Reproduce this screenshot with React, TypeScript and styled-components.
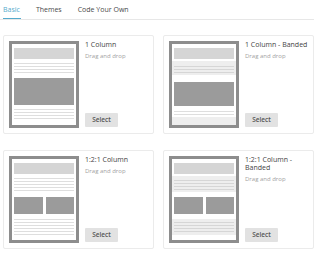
import React from "react";
import styled, { createGlobalStyle } from "styled-components";

const GlobalStyle = createGlobalStyle`
  html, body { margin: 0; padding: 0; background: #ffffff; }
  body { font-family: "Open Sans", "Liberation Sans", sans-serif; }
  * { box-sizing: border-box; }
`;

const Page = styled.div`
  width: 320px;
  height: 256px;
  padding: 0 6px 0 3px;
  overflow: hidden;
`;

const TabBar = styled.div`
  display: flex;
  gap: 15px;
  height: 20px;
  border-bottom: 1px solid #e7e7e7;
  margin-left: -3px;
  padding-left: 3px;
`;

const Tab = styled.div<{ $active?: boolean }>`
  height: 19px;
  padding: 5px 1px 0 0;
  font-size: 7px;
  line-height: 10px;
  color: ${(p) => (p.$active ? "#55aacc" : "#4a4a4a")};
  border-bottom: 1px solid ${(p) => (p.$active ? "#55aacc" : "transparent")};
  white-space: nowrap;
`;

const Grid = styled.div`
  margin-top: 15px;
  display: grid;
  grid-template-columns: 151px 151px;
  column-gap: 9px;
  row-gap: 16px;
`;

const Card = styled.div`
  height: 99px;
  border: 1px solid #ebebeb;
  border-radius: 2px;
  padding: 5px 3px 5px 5px;
  display: flex;
  gap: 6px;
  background: #fff;
`;

const Thumb = styled.div`
  flex: none;
  width: 70px;
  height: 87px;
  border: 3px solid #8d8d8d;
  background: #fff;
  display: flex;
  flex-direction: column;
  padding-top: 4px;
`;

const ThumbHeader = styled.div`
  height: 11px;
  margin: 0 2px;
  background: #d5d5d5;
`;

const LineGroup = styled.div<{ $mt: number; $band?: boolean; $pt?: number; $pb?: number; $fill?: boolean }>`
  margin-top: ${(p) => p.$mt}px;
  padding-top: ${(p) => p.$pt ?? 0}px;
  padding-bottom: ${(p) => p.$pb ?? 0}px;
  display: flex;
  flex-direction: column;
  gap: 2px;
  background: ${(p) => (p.$band ? "#eeeeee" : "transparent")};
  flex: ${(p) => (p.$fill ? "1" : "none")};
`;

const Line = styled.div<{ $band?: boolean }>`
  height: 1px;
  margin: 0 2px;
  background: ${(p) => (p.$band ? "#d6d6d6" : "#dedede")};
`;

const Block = styled.div<{ $mt: number; $h: number }>`
  margin: ${(p) => p.$mt}px 2px 0;
  height: ${(p) => p.$h}px;
  background: #9b9b9b;
`;

const Split = styled.div<{ $mt: number; $h: number }>`
  margin: ${(p) => p.$mt}px 2px 0;
  height: ${(p) => p.$h}px;
  display: grid;
  grid-template-columns: 1fr 1fr;
  gap: 3px;
`;

const SplitCell = styled.div`
  background: #9b9b9b;
`;

const Info = styled.div`
  flex: 1;
  display: flex;
  flex-direction: column;
  align-items: flex-start;
  min-width: 0;
`;

const Title = styled.div`
  font-size: 7px;
  line-height: 8px;
  color: #444;
`;

const Desc = styled.div`
  margin-top: 3px;
  font-size: 6px;
  line-height: 8px;
  color: #a2a2a2;
`;

const SelectButton = styled.button`
  margin-top: auto;
  margin-bottom: 1px;
  width: 33px;
  height: 14px;
  padding: 0;
  border: none;
  border-radius: 1px;
  background: #e2e2e2;
  color: #555;
  font-family: "Open Sans", "Liberation Sans", sans-serif;
  font-size: 6.5px;
  font-weight: 600;
  line-height: 14px;
  cursor: pointer;
`;

const Lines = ({ n, band }: { n: number; band?: boolean }) => (
  <>
    {Array.from({ length: n }).map((_, i) => (
      <Line key={i} $band={band} />
    ))}
  </>
);

type Kind = "one" | "oneBanded" | "split" | "splitBanded";

const Thumbnail = ({ kind }: { kind: Kind }) => {
  if (kind === "one")
    return (
      <Thumb>
        <ThumbHeader />
        <LineGroup $mt={4}>
          <Lines n={4} />
        </LineGroup>
        <Block $mt={5} $h={27} />
        <LineGroup $mt={4}>
          <Lines n={4} />
        </LineGroup>
      </Thumb>
    );
  if (kind === "oneBanded")
    return (
      <Thumb>
        <ThumbHeader />
        <LineGroup $mt={2} $band $pt={5} $pb={2}>
          <Lines n={3} band />
        </LineGroup>
        <Block $mt={7} $h={24} />
        <LineGroup $mt={5}>
          <Lines n={2} />
        </LineGroup>
        <LineGroup $mt={2} $band $fill />
      </Thumb>
    );
  if (kind === "split")
    return (
      <Thumb>
        <ThumbHeader />
        <LineGroup $mt={4}>
          <Lines n={5} />
        </LineGroup>
        <Split $mt={6} $h={17}>
          <SplitCell />
          <SplitCell />
        </Split>
        <LineGroup $mt={5}>
          <Lines n={6} />
        </LineGroup>
      </Thumb>
    );
  return (
    <Thumb>
      <ThumbHeader />
      <LineGroup $mt={2} $band $pt={4} $pb={2}>
        <Lines n={4} band />
      </LineGroup>
      <Split $mt={5} $h={17}>
        <SplitCell />
        <SplitCell />
      </Split>
      <LineGroup $mt={5} $band $pt={3} $pb={3}>
        <Lines n={4} band />
      </LineGroup>
    </Thumb>
  );
};

const templates: { title: string; kind: Kind }[] = [
  { title: "1 Column", kind: "one" },
  { title: "1 Column - Banded", kind: "oneBanded" },
  { title: "1:2:1 Column", kind: "split" },
  { title: "1:2:1 Column - Banded", kind: "splitBanded" },
];

export default function App() {
  return (
    <>
      <GlobalStyle />
      <Page>
        <TabBar>
          <Tab $active>Basic</Tab>
          <Tab>Themes</Tab>
          <Tab>Code Your Own</Tab>
        </TabBar>
        <Grid>
          {templates.map((t) => (
            <Card key={t.title}>
              <Thumbnail kind={t.kind} />
              <Info>
                <Title>{t.title}</Title>
                <Desc>Drag and drop</Desc>
                <SelectButton>Select</SelectButton>
              </Info>
            </Card>
          ))}
        </Grid>
      </Page>
    </>
  );
}
